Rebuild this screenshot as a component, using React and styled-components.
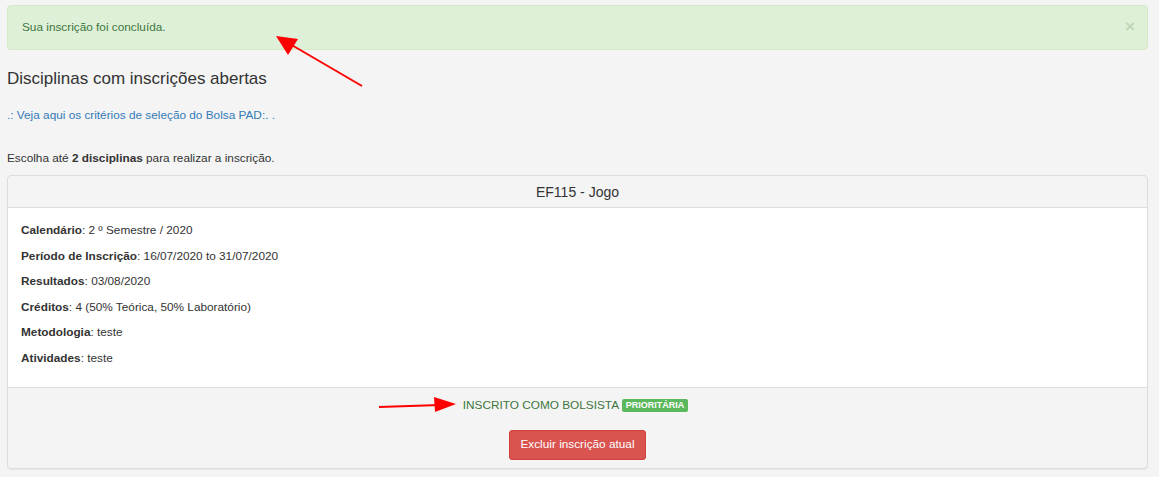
import React from 'react';
import styled, {createGlobalStyle} from 'styled-components';

const GlobalStyle = createGlobalStyle`
  html, body {
    margin: 0;
    padding: 0;
    background: #f4f4f4;
  }
  body {
    font-family: "Liberation Sans", Arial, sans-serif;
    font-size: 11.8px;
    line-height: 17px;
    color: #333;
  }
`;

const App = () => {
  return (
    <>
      <GlobalStyle/>
      <Page>
        <Alert>
          Sua inscrição foi concluída.
          <Close>×</Close>
        </Alert>
        <Title>Disciplinas com inscrições abertas</Title>
        <LinkLine>
          .: <a href="#">Veja aqui os critérios de seleção do Bolsa PAD</a>:. .
        </LinkLine>
        <Intro>
          Escolha até <b>2 disciplinas</b> para realizar a inscrição.
        </Intro>
        <Panel>
          <PanelHeading>EF115 - Jogo</PanelHeading>
          <PanelBody>
            <Info><b>Calendário</b>: 2 º Semestre / 2020</Info>
            <Info><b>Período de Inscrição</b>: 16/07/2020 to 31/07/2020</Info>
            <Info><b>Resultados</b>: 03/08/2020</Info>
            <Info><b>Créditos</b>: 4 (50% Teórica, 50% Laboratório)</Info>
            <Info><b>Metodologia</b>: teste</Info>
            <Info><b>Atividades</b>: teste</Info>
          </PanelBody>
          <PanelFooter>
            <Status>
              INSCRITO COMO BOLSISTA <Badge>Prioritária</Badge>
            </Status>
            <DangerButton>Excluir inscrição atual</DangerButton>
          </PanelFooter>
        </Panel>
        <Arrows width="1159" height="477" viewBox="0 0 1159 477">
          <line x1="362" y1="86" x2="290" y2="44" stroke="#f00" strokeWidth="2"/>
          <polygon points="276,36 298,39 288,55" fill="#f00"/>
          <line x1="379" y1="407" x2="440" y2="405" stroke="#f00" strokeWidth="2"/>
          <polygon points="456,404 434,397 435,412" fill="#f00"/>
        </Arrows>
      </Page>
    </>
  );
};

export default App;

const Page = styled.div`
  position: relative;
  width: 1159px;
  height: 477px;
  box-sizing: border-box;
  padding: 5px 11px 0 7px;
  overflow: hidden;
`;

const Alert = styled.div`
  position: relative;
  background: #dff0d8;
  border: 1px solid #d6e9c6;
  border-radius: 4px;
  color: #3c763d;
  padding: 13px 14px;
`;

const Close = styled.span`
  position: absolute;
  right: 12px;
  top: 12px;
  font-size: 17px;
  font-weight: bold;
  color: #3c763d;
  opacity: 0.2;
`;

const Title = styled.h3`
  margin: 19px 0 0;
  font-size: 17px;
  font-weight: normal;
  line-height: 20px;
  color: #333;
`;

const LinkLine = styled.div`
  margin-top: 18px;
  color: #337ab7;
  a {
    color: #337ab7;
    text-decoration: none;
  }
`;

const Intro = styled.p`
  margin: 26px 0 8px;
`;

const Panel = styled.div`
  background: #f4f4f4;
  border: 1px solid #ddd;
  border-radius: 4px;
  box-shadow: 0 1px 1px rgba(0, 0, 0, 0.05);
`;

const PanelHeading = styled.div`
  padding: 8px 15px 6px;
  text-align: center;
  font-size: 14px;
  line-height: 17px;
  border-bottom: 1px solid #ddd;
`;

const PanelBody = styled.div`
  background: #fff;
  padding: 14px 13px 20px;
  display: flex;
  flex-direction: column;
  gap: 8.6px;
  border-bottom: 1px solid #ddd;
`;

const Info = styled.div`
  b {
    font-weight: bold;
  }
`;

const PanelFooter = styled.div`
  padding: 9px 15px 8px;
  display: flex;
  flex-direction: column;
  align-items: center;
  gap: 16px;
`;

const Status = styled.div`
  color: #3c763d;
  text-transform: uppercase;
  padding-right: 4px;
`;

const Badge = styled.span`
  display: inline-block;
  background: #5cb85c;
  color: #fff;
  font-size: 9px;
  font-weight: bold;
  line-height: 9px;
  padding: 2px 4px 2px;
  border-radius: 2px;
  vertical-align: 1px;
  text-transform: uppercase;
`;

const DangerButton = styled.button`
  font-family: "Liberation Sans", Arial, sans-serif;
  font-size: 11.8px;
  line-height: 17px;
  color: #fff;
  background: #d9534f;
  border: 1px solid #d43f3a;
  border-radius: 3px;
  padding: 5px 10px 6px;
`;

const Arrows = styled.svg`
  position: absolute;
  left: 0;
  top: 0;
  pointer-events: none;
`;
